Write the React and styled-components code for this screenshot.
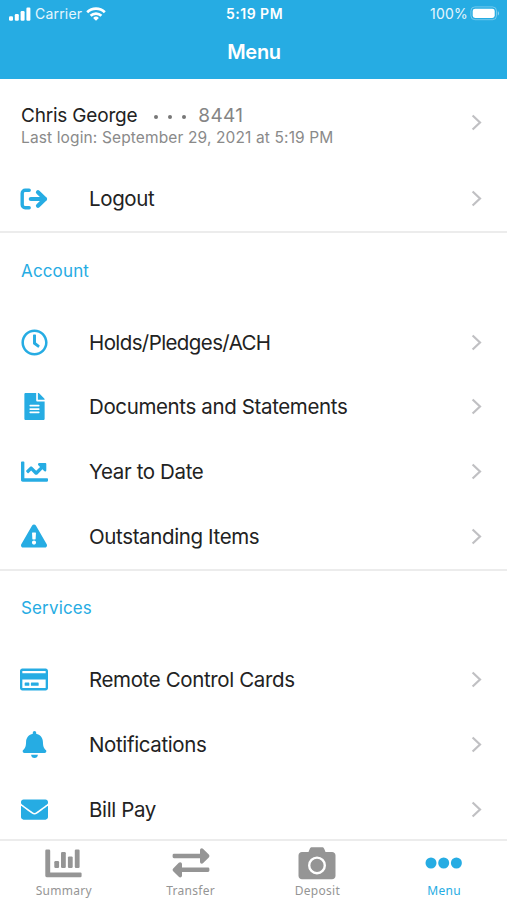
import React from 'react';
import styled, { createGlobalStyle } from 'styled-components';
import {
  FaRegClock,
  FaFileAlt,
  FaChartLine,
  FaExclamationTriangle,
  FaBell,
  FaEnvelope,
} from 'react-icons/fa';

const BLUE = '#26ace3';

const LogoutIcon = () => (
  <svg viewBox="0 0 28 22" width="28" height="22" fill="none" stroke="currentColor">
    <path
      d="M9.2 2.2H5.2a3 3 0 0 0-3 3v11.600a3 3 0 0 0 3 3h4"
      strokeWidth="3.4"
      strokeLinecap="round"
    />
    <path d="M10.8 11h14" strokeWidth="4.2" strokeLinecap="round" />
    <path
      d="M18 4.2 25 11l-7 6.800"
      strokeWidth="4.2"
      strokeLinecap="round"
      strokeLinejoin="round"
    />
  </svg>
);

const CardIcon = () => (
  <svg viewBox="0 0 576 512" width="28" height="25" fill="currentColor">
    <path
      fillRule="evenodd"
      d="M528 32H48C21 32 0 54 0 80v352c0 27 21 48 48 48h480c27 0 48-21 48-48V80c0-26-21-48-48-48zM54 80h468c4 0 6 3 6 6v42H48V86c0-3 3-6 6-6zm468 352H54c-3 0-6-3-6-6V256h480v170c0 3-2 6-6 6zM192 332v40c0 7-5 12-12 12h-72c-7 0-12-5-12-12v-40c0-7 5-12 12-12h72c7 0 12 5 12 12zm192 0v40c0 7-5 12-12 12H236c-7 0-12-5-12-12v-40c0-7 5-12 12-12h136c7 0 12 5 12 12z"
    />
  </svg>
);

const SummaryIcon = () => (
  <svg viewBox="0 0 37 29" width="37" height="29" fill="currentColor">
    <path d="M1.500.5h2.500a1.200 1.200 0 0 1 1.200 1.200V23.400h30.200a1.200 1.200 0 0 1 1.200 1.200v2.400a1.200 1.200 0 0 1-1.200 1.200H1.700A1.400 1.400 0 0 1 .3 26.800V1.700A1.200 1.200 0 0 1 1.500.5z" />
    <rect x="9.3" y="12" width="4.8" height="7" rx="1.2" />
    <rect x="16" y="3" width="4.8" height="16" rx="1.2" />
    <rect x="22.900" y="7.4" width="4.8" height="11.6" rx="1.2" />
    <rect x="29.800" y=".6" width="4.8" height="18.4" rx="1.2" />
  </svg>
);

const TransferIcon = () => (
  <svg viewBox="0 0 38 30" width="38" height="30" fill="currentColor">
    <path d="M2 5.800h26V2.300c0-1.900 2-2.600 3.200-1.300l5.600 5.600c.8.900.8 1.900 0 2.800l-5.600 5.600c-1.200 1.300-3.200.6-3.200-1.300v-3.500H2A1.400 1.400 0 0 1 .600 8.800V7.200A1.400 1.400 0 0 1 2 5.800z" />
    <path d="M36 19.600H10v-3.500c0-1.900-2-2.600-3.200-1.300l-5.600 5.600c-.8.900-.8 1.900 0 2.800l5.600 5.600c1.200 1.300 3.200.6 3.200-1.300V24h26a1.400 1.400 0 0 0 1.400-1.400V21A1.400 1.400 0 0 0 36 19.600z" />
  </svg>
);

const CameraIcon = () => (
  <svg viewBox="0 0 38 33" width="38" height="33">
    <path
      fill="currentColor"
      d="M4 5h6.5l1.2-3C12.2.7 13 .3 14.2.3h9.600c1.2 0 2 .4 2.5 1.700l1.2 3H34c2 0 3.5 1.500 3.5 3.500v20.300c0 2-1.500 3.500-3.500 3.500H4c-2 0-3.500-1.500-3.500-3.500V8.500C.5 6.500 2 5 4 5z"
    />
    <circle cx="19" cy="18.4" r="7.8" fill="none" stroke="#fff" strokeWidth="2.4" />
  </svg>
);

const DotsIcon = () => (
  <svg viewBox="0 0 38 12" width="38" height="12" fill="currentColor">
    <circle cx="6" cy="6" r="5.5" />
    <circle cx="18.7" cy="6" r="5.5" />
    <circle cx="31.4" cy="6" r="5.5" />
  </svg>
);

const SignalIcon = () => (
  <svg viewBox="0 0 22 14" width="22" height="14" fill="#fff">
    <rect x="0" y="9.3" width="4" height="4.4" rx="1.2" />
    <rect x="5.8" y="7" width="4" height="6.7" rx="1.2" />
    <rect x="11.6" y="4" width="4" height="9.7" rx="1.2" />
    <rect x="17.4" y=".6" width="4" height="13.1" rx="1.2" />
  </svg>
);

const WifiIcon = () => (
  <svg viewBox="0 0 20 14" width="20" height="14" fill="none" stroke="#fff" strokeWidth="2.7">
    <path d="M1.2 5.200a12.600 12.600 0 0 1 17.600 0" />
    <path d="M4.6 8.700a7.800 7.800 0 0 1 10.800 0" />
    <path d="M10 13.800 7.100 11a4.200 4.200 0 0 1 5.800 0z" fill="#fff" stroke="none" />
  </svg>
);

const BatteryIcon = () => (
  <svg viewBox="0 0 30 15" width="30" height="15">
    <rect x=".9" y=".9" width="25.6" height="12.8" rx="4" fill="none" stroke="#fff" strokeOpacity=".35" />
    <rect x="2.7" y="2.7" width="22" height="9.2" rx="2.4" fill="#fff" />
    <path d="M27.800 5.200c1.500.5 1.500 3.700 0 4.200z" fill="#fff" opacity=".5" />
  </svg>
);

const Chevron = () => (
  <svg viewBox="0 0 11 17" width="11" height="17" fill="none" stroke="#c0c0c3" strokeWidth="2.2">
    <path d="M1.6 1.500 9 8.500l-7.400 7" />
  </svg>
);

const accountItems = [
  { label: 'Holds/Pledges/ACH', icon: <FaRegClock size={27} />, spacing: '-0.6px' },
  { label: 'Documents and Statements', icon: <FaFileAlt size={27} /> },
  { label: 'Year to Date', icon: <FaChartLine size={27} /> },
  { label: 'Outstanding Items', icon: <FaExclamationTriangle size={26} /> },
];

const serviceItems = [
  { label: 'Remote Control Cards', icon: <CardIcon /> },
  { label: 'Notifications', icon: <FaBell size={27} /> },
  { label: 'Bill Pay', icon: <FaEnvelope size={27} /> },
];

const tabs = [
  { label: 'Summary', icon: <SummaryIcon /> },
  { label: 'Transfer', icon: <TransferIcon /> },
  { label: 'Deposit', icon: <CameraIcon /> },
  { label: 'Menu', icon: <DotsIcon />, active: true },
];

const MenuRow = ({ icon, label, spacing }) => (
  <Row>
    <IconBox>{icon}</IconBox>
    <RowLabel $spacing={spacing}>{label}</RowLabel>
    <Chevron />
  </Row>
);

const App = () => {
  return (
    <>
      <GlobalStyle />
      <Screen>
        <Header>
          <StatusBar>
            <StatusLeft>
              <SignalIcon />
              <StatusText>Carrier</StatusText>
              <WifiIcon />
            </StatusLeft>
            <Clock>5:19 PM</Clock>
            <StatusRight>
              <StatusText>100%</StatusText>
              <BatteryIcon />
            </StatusRight>
          </StatusBar>
          <Title>Menu</Title>
        </Header>

        <Content>
          <UserRow>
            <UserInfo>
              <UserName>
                Chris George
                <Mask>
                  <i />
                  <i />
                  <i />
                </Mask>
                <span>8441</span>
              </UserName>
              <LastLogin>Last login: September 29, 2021 at 5:19 PM</LastLogin>
            </UserInfo>
            <Chevron />
          </UserRow>
          <MenuRow icon={<LogoutIcon />} label="Logout" />

          <Section>
            <SectionTitle>Account</SectionTitle>
            {accountItems.map(item => (
              <MenuRow key={item.label} {...item} />
            ))}
          </Section>

          <Section>
            <SectionTitle>Services</SectionTitle>
            {serviceItems.map(item => (
              <MenuRow key={item.label} {...item} />
            ))}
          </Section>
        </Content>

        <TabBar>
          {tabs.map(tab => (
            <Tab key={tab.label} $active={tab.active}>
              <TabIcon>{tab.icon}</TabIcon>
              <TabLabel>{tab.label}</TabLabel>
            </Tab>
          ))}
        </TabBar>
      </Screen>
    </>
  );
};

const GlobalStyle = createGlobalStyle`
  * {
    box-sizing: border-box;
  }

  body {
    margin: 0;
    background: #fff;
    font-family: Inter, 'Liberation Sans', sans-serif;
  }

  svg {
    display: block;
    flex: none;
  }
`;

const Screen = styled.div`
  display: flex;
  flex-direction: column;
  width: 507px;
  height: 900px;
  overflow: hidden;
  background: #fff;
`;

const Header = styled.header`
  flex: none;
  height: 79px;
  background: ${BLUE};
  color: #fff;
`;

const StatusBar = styled.div`
  display: grid;
  grid-template-columns: 1fr auto 1fr;
  align-items: center;
  height: 27px;
  padding: 0 7px 0 9px;
`;

const StatusLeft = styled.div`
  display: flex;
  align-items: center;
  gap: 4px;
`;

const StatusRight = styled(StatusLeft)`
  justify-content: flex-end;
  gap: 2px;
`;

const StatusText = styled.span`
  font-size: 14px;
  line-height: 18px;
  letter-spacing: 0.2px;
  color: #e6f6fd;
`;

const Clock = styled.span`
  font-size: 14px;
  line-height: 18px;
  font-weight: 600;
  letter-spacing: 0.5px;
`;

const Title = styled.h1`
  margin: 0;
  padding-left: 1px;
  font-size: 20px;
  line-height: 51px;
  font-weight: 600;
  letter-spacing: -0.3px;
  text-align: center;
`;

const Content = styled.main`
  flex: 1;
  min-height: 0;
  overflow: hidden;
`;

const UserRow = styled.div`
  display: flex;
  align-items: center;
  justify-content: space-between;
  height: 87.5px;
  padding: 0 25px 0 21px;
`;

const UserInfo = styled.div`
  padding-top: 5px;
`;

const UserName = styled.div`
  display: flex;
  align-items: center;
  font-size: 19px;
  line-height: 24px;
  letter-spacing: -0.2px;
  color: #222;

  span {
    letter-spacing: 0.3px;
    color: #858585;
  }
`;

const Mask = styled.div`
  display: flex;
  gap: 10px;
  margin: 2px 12px 0 17px;

  i {
    width: 4px;
    height: 4px;
    border-radius: 50%;
    background: #777;
  }
`;

const LastLogin = styled.div`
  font-size: 15.5px;
  line-height: 19px;
  letter-spacing: 0.13px;
  color: #8a8a8a;
`;

const Row = styled.div`
  display: flex;
  align-items: center;
  height: 64.7px;
  padding: 0 25px 0 20px;
`;

const IconBox = styled.div`
  display: flex;
  justify-content: center;
  flex: none;
  width: 28px;
  color: ${BLUE};
`;

const RowLabel = styled.div`
  flex: 1;
  margin-left: 41px;
  padding-top: 1px;
  font-size: 20.5px;
  line-height: 26px;
  letter-spacing: ${({ $spacing }) => $spacing || '-0.37px'};
  color: #222;
`;

const Section = styled.section`
  border-top: 2px solid #ececec;
`;

const SectionTitle = styled.h2`
  display: flex;
  align-items: center;
  height: 76.7px;
  margin: 0;
  padding: 0 0 2px 21px;
  font-size: 17px;
  font-weight: 400;
  letter-spacing: 0.15px;
  color: ${BLUE};
`;

const TabBar = styled.nav`
  display: flex;
  flex: none;
  height: 61px;
  border-top: 2px solid #ececec;
  background: #fff;
`;

const Tab = styled.div`
  display: flex;
  flex: 1;
  flex-direction: column;
  align-items: center;
  color: ${({ $active }) => ($active ? BLUE : '#959595')};
`;

const TabIcon = styled.div`
  display: flex;
  align-items: center;
  height: 44px;
  padding-left: 1px;
`;

const TabLabel = styled.span`
  padding-left: 1px;
  font-family: 'Noto Sans', sans-serif;
  font-size: 12px;
  line-height: 12px;
  letter-spacing: 0.3px;
`;

export default App;
